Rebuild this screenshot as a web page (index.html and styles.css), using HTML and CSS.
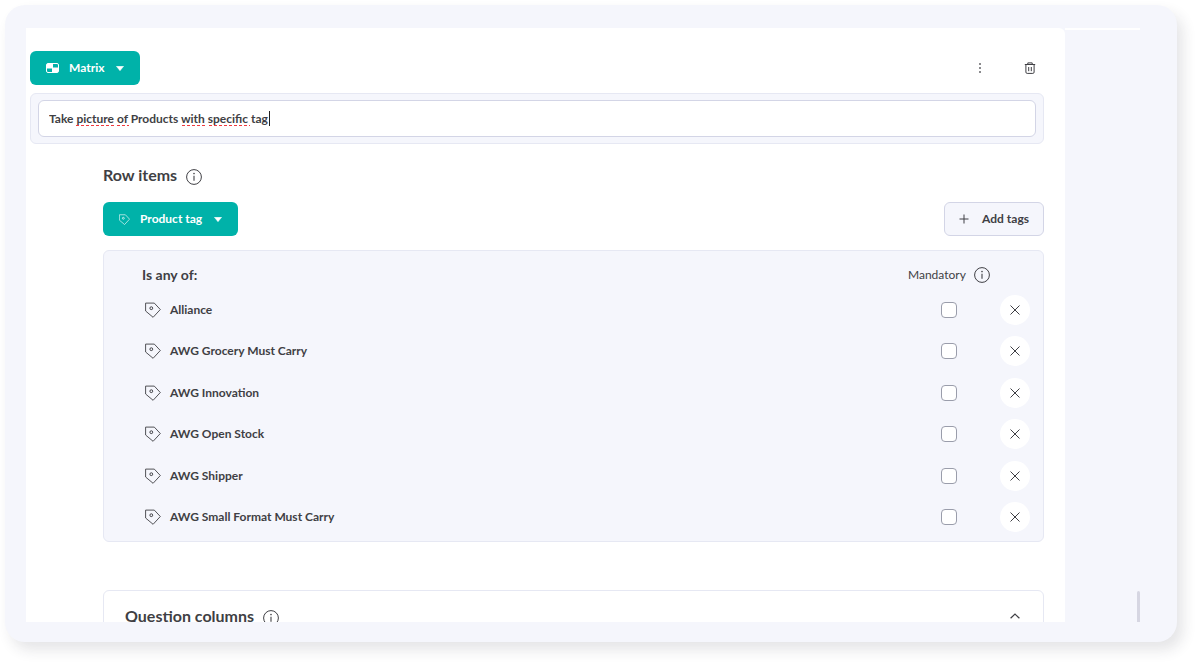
FILE: index.html
```html
<!DOCTYPE html>
<html lang="en">
<head>
  <meta charset="UTF-8">
  <meta name="viewport" content="width=device-width, initial-scale=1.0">
  <title>Question editor</title>
  <link rel="stylesheet" href="styles.css">
</head>
<body>
  <!-- Shared icons -->
  <svg class="icon-defs" aria-hidden="true">
    <symbol id="icon-tag" viewBox="0 0 16 16">
      <path d="M.6 1.1h8.7l6 6.4-7.2 7.8L.6 9z" fill="none" stroke="currentColor" stroke-width=".9" stroke-linejoin="round"/>
      <circle cx="6.3" cy="6.2" r="1.4" fill="none" stroke="currentColor"/>
    </symbol>
    <symbol id="icon-info" viewBox="0 0 16 16">
      <circle cx="8" cy="8" r="7.4" fill="none" stroke="currentColor"/>
      <path d="M8 6.8v5" fill="none" stroke="currentColor" stroke-width="1.1"/>
      <circle cx="8" cy="4.6" r=".8" fill="currentColor"/>
    </symbol>
    <symbol id="icon-close" viewBox="0 0 10 10">
      <path d="M.5.5l9 9M9.5.5l-9 9" fill="none" stroke="currentColor"/>
    </symbol>
    <symbol id="icon-caret" viewBox="0 0 8 5">
      <path d="M.4.3h7.2L4 4.7z" fill="currentColor" stroke="currentColor" stroke-width=".5" stroke-linejoin="round"/>
    </symbol>
  </svg>

  <div class="frame">
    <div class="screen">
      <main class="editor">
        <!-- Question type and actions -->
        <div class="toolbar">
          <button class="btn btn-primary" type="button">
            <svg class="icon-matrix" viewBox="0 0 13 10" aria-hidden="true">
              <rect x=".5" y=".5" width="12" height="9" rx="1.5" fill="none" stroke="currentColor"/>
              <path d="M1 1h5.5v4H1zM6.5 5H12v4H6.5z" fill="currentColor"/>
              <path d="M6.5 1v8M1 5h11" stroke="currentColor"/>
            </svg>
            Matrix
            <svg class="icon-caret" aria-hidden="true"><use href="#icon-caret"/></svg>
          </button>
          <div class="toolbar-actions">
            <button class="btn-icon" type="button" aria-label="More options">
              <svg class="icon-action" viewBox="0 0 12 12" aria-hidden="true">
                <path d="M5.2 1.2h1.6v1.6H5.2zM5.2 5.2h1.6v1.6H5.2zM5.2 9.2h1.6v1.6H5.2z" fill="currentColor"/>
              </svg>
            </button>
            <button class="btn-icon" type="button" aria-label="Delete question">
              <svg class="icon-action" viewBox="0 0 12 12" aria-hidden="true">
                <path d="M.8 2.5h10.4M3.8 2.3V.9h4.4v1.4M1.9 2.7v7.4q0 1.3 1.3 1.3h5.6q1.3 0 1.3-1.3V2.7M4.7 5v4.2M7.3 5v4.2" fill="none" stroke="currentColor"/>
              </svg>
            </button>
          </div>
        </div>

        <!-- Question text -->
        <div class="question">
          <input class="question-input" type="text" aria-label="Question text" value="Take picture of Products with specific tag">
          <svg class="spell-marks" viewBox="0 0 222 18" aria-hidden="true">
            <path class="spell-line" d="M27 15.5h39M68 15.5h12M133 15.5h24M160 15.5h41"/>
            <path class="text-cursor" d="M220.5 1v15"/>
          </svg>
        </div>

        <!-- Row items -->
        <section class="rows">
          <h2 class="section-title">
            Row items
            <svg class="icon-info" aria-hidden="true"><use href="#icon-info"/></svg>
          </h2>

          <div class="rows-actions">
            <button class="btn btn-primary" type="button">
              <svg class="icon-tag-small" aria-hidden="true"><use href="#icon-tag"/></svg>
              Product tag
              <svg class="icon-caret" aria-hidden="true"><use href="#icon-caret"/></svg>
            </button>
            <button class="btn btn-outline" type="button">
              <svg class="icon-plus" viewBox="0 0 10 10" aria-hidden="true">
                <path d="M5 .5v9M.5 5h9" stroke="currentColor"/>
              </svg>
              Add tags
            </button>
          </div>

          <div class="tags">
            <table class="tags-table">
              <thead>
                <tr>
                  <th class="col-name" scope="col">Is any of:</th>
                  <th class="col-mandatory" scope="col">
                    <span class="mandatory-label">
                      Mandatory
                      <svg class="icon-info" aria-hidden="true"><use href="#icon-info"/></svg>
                    </span>
                  </th>
                  <td class="col-remove"></td>
                </tr>
              </thead>
              <tbody>
                <tr>
                  <td><label class="tag-name" for="tag-1"><svg class="icon-tag" aria-hidden="true"><use href="#icon-tag"/></svg>Alliance</label></td>
                  <td class="cell-center"><input class="checkbox" type="checkbox" id="tag-1"></td>
                  <td class="cell-center"><button class="btn-remove" type="button" aria-label="Remove"><svg class="icon-close" aria-hidden="true"><use href="#icon-close"/></svg></button></td>
                </tr>
                <tr>
                  <td><label class="tag-name" for="tag-2"><svg class="icon-tag" aria-hidden="true"><use href="#icon-tag"/></svg>AWG Grocery Must Carry</label></td>
                  <td class="cell-center"><input class="checkbox" type="checkbox" id="tag-2"></td>
                  <td class="cell-center"><button class="btn-remove" type="button" aria-label="Remove"><svg class="icon-close" aria-hidden="true"><use href="#icon-close"/></svg></button></td>
                </tr>
                <tr>
                  <td><label class="tag-name" for="tag-3"><svg class="icon-tag" aria-hidden="true"><use href="#icon-tag"/></svg>AWG Innovation</label></td>
                  <td class="cell-center"><input class="checkbox" type="checkbox" id="tag-3"></td>
                  <td class="cell-center"><button class="btn-remove" type="button" aria-label="Remove"><svg class="icon-close" aria-hidden="true"><use href="#icon-close"/></svg></button></td>
                </tr>
                <tr>
                  <td><label class="tag-name" for="tag-4"><svg class="icon-tag" aria-hidden="true"><use href="#icon-tag"/></svg>AWG Open Stock</label></td>
                  <td class="cell-center"><input class="checkbox" type="checkbox" id="tag-4"></td>
                  <td class="cell-center"><button class="btn-remove" type="button" aria-label="Remove"><svg class="icon-close" aria-hidden="true"><use href="#icon-close"/></svg></button></td>
                </tr>
                <tr>
                  <td><label class="tag-name" for="tag-5"><svg class="icon-tag" aria-hidden="true"><use href="#icon-tag"/></svg>AWG Shipper</label></td>
                  <td class="cell-center"><input class="checkbox" type="checkbox" id="tag-5"></td>
                  <td class="cell-center"><button class="btn-remove" type="button" aria-label="Remove"><svg class="icon-close" aria-hidden="true"><use href="#icon-close"/></svg></button></td>
                </tr>
                <tr>
                  <td><label class="tag-name" for="tag-6"><svg class="icon-tag" aria-hidden="true"><use href="#icon-tag"/></svg>AWG Small Format Must Carry</label></td>
                  <td class="cell-center"><input class="checkbox" type="checkbox" id="tag-6"></td>
                  <td class="cell-center"><button class="btn-remove" type="button" aria-label="Remove"><svg class="icon-close" aria-hidden="true"><use href="#icon-close"/></svg></button></td>
                </tr>
              </tbody>
            </table>
          </div>

          <!-- Question columns -->
          <div class="columns-card">
            <h2 class="section-title">
              Question columns
              <svg class="icon-info" aria-hidden="true"><use href="#icon-info"/></svg>
            </h2>
            <button class="btn-icon" type="button" aria-label="Collapse">
              <svg class="icon-chevron" viewBox="0 0 10 6" aria-hidden="true">
                <path d="M.6 5.3L5 1.1l4.4 4.2" fill="none" stroke="currentColor" stroke-width="1.2"/>
              </svg>
            </button>
          </div>
        </section>
      </main>

      <div class="gutter">
        <div class="scroll-thumb"></div>
      </div>
    </div>
  </div>
</body>
</html>
```
FILE: styles.css
```css
* {
  box-sizing: border-box;
}

body {
  margin: 0;
  background: #fff;
  color: #3f3f44;
  font-family: Lato, "Liberation Sans", sans-serif;
  font-size: 12px;
  font-weight: 700;
  line-height: 16px;
}

button,
input {
  font: inherit;
  color: inherit;
}

svg {
  display: block;
  flex: none;
}

.icon-defs {
  position: absolute;
  width: 0;
  height: 0;
}

/* Outer frame */
.frame {
  display: flex;
  height: calc(100vh - 30px);
  margin: 5px 25px 25px 5px;
  padding: 23px 37px 20px 21px;
  background: #f5f6fc;
  border-radius: 20px;
  box-shadow: 6px 8px 14px rgba(40, 45, 60, 0.12);
}

.screen {
  display: flex;
  flex: 1;
  overflow: hidden;
}

.editor {
  flex: 1;
  padding: 23px 21px 0 4px;
  background: #fff;
  border-top-right-radius: 6px;
}

.gutter {
  display: flex;
  flex-direction: column;
  justify-content: flex-end;
  align-items: flex-end;
  width: 75px;
  border-top: 2px solid #fff;
}

.scroll-thumb {
  width: 3px;
  height: 31px;
  background: #d6d6e2;
  border-radius: 2px 2px 0 0;
}

/* Buttons */
.btn {
  display: flex;
  align-items: center;
  height: 34px;
  padding: 0 15px;
  border: 0;
  border-radius: 6px;
  cursor: pointer;
}

.btn-primary {
  gap: 10px;
  padding: 0 16px;
  background: #00b2a9;
  color: #fff;
}

.btn-primary .icon-caret {
  margin-left: 2px;
}

.btn-outline {
  gap: 13px;
  padding: 0 14px;
  background: #f5f6fc;
  border: 1px solid #d3d5e6;
}

.btn-icon {
  display: flex;
  align-items: center;
  justify-content: center;
  width: 28px;
  height: 28px;
  padding: 0;
  border: 0;
  background: none;
  cursor: pointer;
}

/* Icons */
.icon-matrix {
  width: 13px;
  height: 10px;
}

.icon-caret {
  width: 8px;
  height: 5px;
}

.icon-action {
  width: 12px;
  height: 12px;
}

.icon-info,
.icon-tag {
  width: 16px;
  height: 16px;
}

.icon-tag-small {
  width: 11px;
  height: 11px;
}

.icon-plus,
.icon-close {
  width: 10px;
  height: 10px;
}

.icon-chevron {
  width: 10px;
  height: 6px;
}

/* Question */
.toolbar {
  display: flex;
  align-items: center;
  justify-content: space-between;
  margin-bottom: 8px;
}

.toolbar-actions {
  display: flex;
  gap: 22px;
}

.question {
  position: relative;
  padding: 6px 7px;
  background: #f5f6fc;
  border: 1px solid #e6e8f3;
  border-radius: 6px;
}

.question-input {
  display: block;
  width: 100%;
  height: 37px;
  padding: 0 10px;
  background: #fff;
  border: 1px solid #d3d5e6;
  border-radius: 6px;
}

/* Spelling marks and cursor drawn over the input */
.spell-marks {
  position: absolute;
  top: 16px;
  left: 18px;
  width: 222px;
  height: 18px;
  pointer-events: none;
}

.spell-line {
  fill: none;
  stroke: #f0383c;
  stroke-dasharray: 3 2;
}

.text-cursor {
  stroke: #222;
}

/* Row items */
.rows {
  padding: 21px 0 0 73px;
}

.section-title {
  display: flex;
  align-items: center;
  gap: 9px;
  margin: 0;
  font-size: 16px;
  line-height: 20px;
}

.section-title .icon-info {
  margin-top: 4px;
}

.rows-actions {
  display: flex;
  justify-content: space-between;
  margin: 17px 0 14px;
}

.tags {
  padding: 10px 3px 3px 38px;
  background: #f5f6fc;
  border: 1px solid #e6e8f3;
  border-radius: 6px;
}

.tags-table {
  width: 100%;
  height: 277px;
  border-collapse: collapse;
}

.tags-table th,
.tags-table td {
  padding: 0;
}

.tags-table thead tr {
  height: 28px;
}

.col-name {
  font-size: 14px;
  text-align: left;
}

.col-mandatory {
  width: 82px;
  font-weight: 400;
}

.col-remove {
  width: 50px;
}

.mandatory-label {
  display: flex;
  align-items: center;
  justify-content: space-between;
}

.cell-center {
  text-align: center;
}

.tag-name {
  display: flex;
  align-items: center;
  gap: 9px;
  padding-left: 3px;
}

.checkbox {
  display: block;
  width: 16px;
  height: 16px;
  margin: 0 auto;
  appearance: none;
  background: #fff;
  border: 1px solid #9a9dab;
  border-radius: 4px;
}

.checkbox:checked {
  background: #00b2a9;
}

.btn-remove {
  display: flex;
  align-items: center;
  justify-content: center;
  width: 30px;
  height: 30px;
  margin: 0 auto;
  padding: 0;
  background: #fff;
  border: 0;
  border-radius: 50%;
  cursor: pointer;
}

/* Question columns */
.columns-card {
  display: flex;
  align-items: center;
  justify-content: space-between;
  height: 80px;
  margin-top: 48px;
  padding: 0 14px 28px 21px;
  border: 1px solid #e6e8f3;
  border-radius: 6px;
}
```
